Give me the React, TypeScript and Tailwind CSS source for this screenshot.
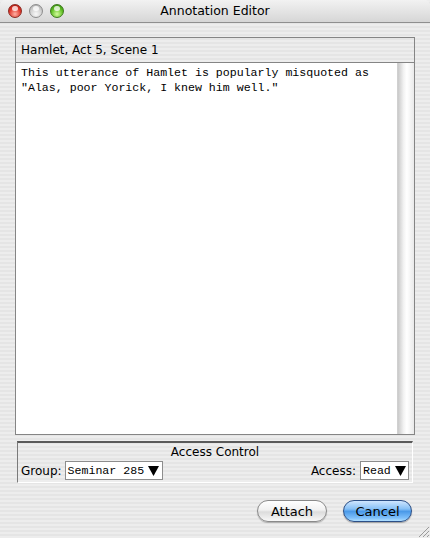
import React from 'react';

const STRIPES =
  'bg-[repeating-linear-gradient(180deg,#ededed_0px,#ededed_2px,#e5e5e5_2px,#e5e5e5_4px)]';

function TrafficLight({ color }: { color: 'red' | 'gray' | 'green' }) {
  const fill =
    color === 'red'
      ? 'bg-[radial-gradient(circle_at_50%_75%,#ffb0a4_0%,#e0362a_55%,#a3150c_100%)] border-[#8a2a22]'
      : color === 'green'
        ? 'bg-[radial-gradient(circle_at_50%_75%,#d4fb9c_0%,#5fbf24_55%,#2f7d0d_100%)] border-[#3e7a1c]'
        : 'bg-[radial-gradient(circle_at_50%_75%,#f8f8f8_0%,#d0d0d0_55%,#a2a2a2_100%)] border-[#8c8c8c]';
  return (
    <span className={`relative block h-[14px] w-[14px] rounded-full border ${fill}`}>
      <span className="absolute left-[3px] top-[1px] h-[5px] w-[6px] rounded-full bg-white/75" />
    </span>
  );
}

function PopUp({ label, width }: { label: string; width: string }) {
  return (
    <div
      className={`flex h-[19px] ${width} items-center gap-[4px] whitespace-nowrap border border-[#8d8d8d] bg-white pl-[2px] font-['Liberation_Mono',monospace] text-[11.6px] leading-none text-black`}
    >
      <span>{label}</span>
      <svg width="11" height="11" viewBox="0 0 11 11" className="shrink-0">
        <polygon points="0,1 11,1 5.5,11" fill="#000" />
      </svg>
    </div>
  );
}

export default function App() {
  return (
    <div
      className={`flex h-[538px] w-[430px] flex-col overflow-hidden font-['DejaVu_Sans',sans-serif] text-black ${STRIPES}`}
    >
      {/* title bar */}
      <div className="relative flex h-[23px] shrink-0 items-center rounded-t-[5px] border-b border-[#8f8f8f] bg-[linear-gradient(180deg,#f2f2f2,#d6d6d6)]">
        <div className="flex items-center gap-[7px] pl-[8px]">
          <TrafficLight color="red" />
          <TrafficLight color="gray" />
          <TrafficLight color="green" />
        </div>
        <span className="absolute inset-x-0 text-center text-[12.5px] leading-none text-black">
          Annotation Editor
        </span>
      </div>

      {/* main box */}
      <div className="mx-[15px] mt-[14px] flex h-[398px] flex-col border border-[#858585]">
        <div className="flex h-[25px] shrink-0 items-center border-b border-[#858585] pl-[5px] text-[12px]">
          Hamlet, Act 5, Scene 1
        </div>
        <div className="flex min-h-0 flex-1 bg-white">
          <div className="flex-1 whitespace-pre pl-[5px] pt-[2px] font-['Liberation_Mono',monospace] text-[11.6px] leading-[15px] text-black">
            {'This utterance of Hamlet is popularly misquoted as\n"Alas, poor Yorick, I knew him well."'}
          </div>
          <div className="w-[17px] shrink-0 border-l border-[#d0d0d0] bg-[linear-gradient(90deg,#c9c9c9_0%,#f2f2f2_35%,#ffffff_55%,#eaeaea_100%)]" />
        </div>
      </div>

      {/* access control */}
      <div className="mx-[17px] mt-[6px] h-[42px] border-t-2 border-r border-b border-l border-t-[#5a5a5a] border-r-white border-b-white border-l-[#7a7a7a] px-[3px] text-[12px]">
        <div className="pt-[2px] text-center leading-[15px]">Access Control</div>
        <div className="mt-[1px] flex items-center">
          <span>Group:</span>
          <div className="ml-[3px]">
            <PopUp label="Seminar 285" width="w-[98px]" />
          </div>
          <span className="ml-auto">Access:</span>
          <div className="ml-[4px]">
            <PopUp label="Read" width="w-[49px]" />
          </div>
        </div>
      </div>

      {/* buttons */}
      <div className="mt-[17px] flex justify-end gap-[16px] pr-[18px]">
        <button
          type="button"
          className="h-[22px] w-[70px] rounded-full border border-[#8a8a8a] bg-[linear-gradient(180deg,#ffffff_0%,#f1f1f1_45%,#dcdcdc_55%,#f8f8f8_100%)] text-[13px] leading-none shadow-[0_1px_1px_rgba(0,0,0,0.25)]"
        >
          Attach
        </button>
        <button
          type="button"
          className="h-[22px] w-[69px] rounded-full border border-[#2c4f86] bg-[linear-gradient(180deg,#cfe6ff_0%,#86c0f6_40%,#4a99e8_52%,#7fc0fb_85%,#b2e0ff_100%)] text-[13px] leading-none shadow-[0_1px_1px_rgba(0,0,0,0.3)]"
        >
          Cancel
        </button>
      </div>

      {/* resize grip */}
      <div className="mt-auto flex justify-end">
        <svg width="14" height="14" viewBox="0 0 14 14">
          <line x1="13" y1="3" x2="3" y2="13" stroke="#9a9a9a" />
          <line x1="13" y1="7" x2="7" y2="13" stroke="#9a9a9a" />
          <line x1="13" y1="11" x2="11" y2="13" stroke="#9a9a9a" />
        </svg>
      </div>
    </div>
  );
}
